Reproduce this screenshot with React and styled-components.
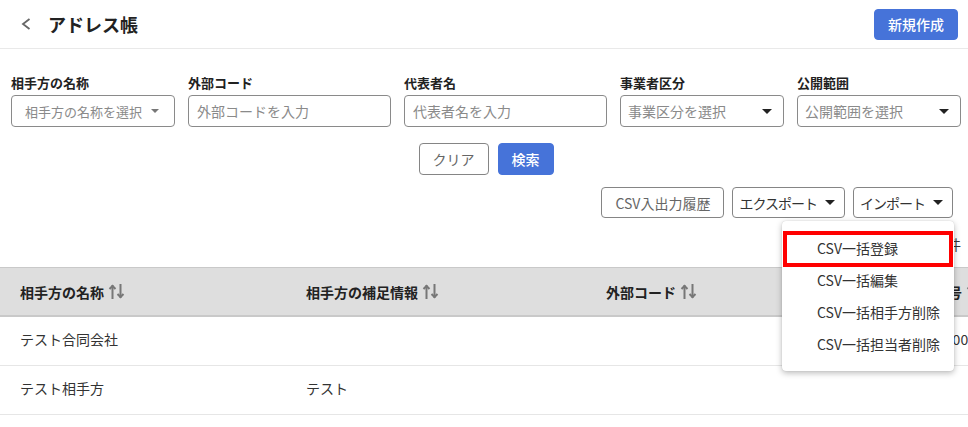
import React from "react";
import styled, { createGlobalStyle } from "styled-components";

const FONT = `"Noto Sans CJK JP", "Noto Sans", sans-serif`;

const GlobalStyle = createGlobalStyle`
  html, body {
    margin: 0;
    padding: 0;
    background: #ffffff;
    overflow: hidden;
  }
  body {
    font-family: ${FONT};
    color: #222;
  }
  * { box-sizing: border-box; }
`;

const Page = styled.div`
  width: 968px;
  min-height: 427px;
  background: #fff;
`;

const Header = styled.header`
  height: 49px;
  display: flex;
  align-items: center;
  gap: 16px;
  padding: 0 10px 0 20px;
  border-bottom: 1px solid #e9e9e9;
`;

const BackButton = styled.button`
  border: none;
  background: transparent;
  padding: 0;
  width: 12px;
  height: 12px;
  display: flex;
  cursor: pointer;
`;

const Title = styled.h1`
  margin: 0;
  font-size: 18px;
  font-weight: 700;
  color: #222;
  flex: 1;
`;

const Button = styled.button`
  height: ${(p) => (p.$small ? "31px" : "32px")};
  padding: ${(p) => (p.$dropdown ? "0 8px 0 6px" : "0 13px")};
  border-radius: 4px;
  font-family: ${FONT};
  font-size: 14px;
  display: inline-flex;
  align-items: center;
  gap: 7px;
  white-space: nowrap;
  cursor: pointer;
  border: 1px solid ${(p) => (p.$primary ? "#4673d9" : "#858585")};
  background: ${(p) => (p.$primary ? "#4673d9" : "#fff")};
  color: ${(p) => (p.$primary ? "#fff" : p.$muted ? "#666" : "#333")};
  font-weight: ${(p) => (p.$primary ? 500 : 400)};
`;

const ButtonLabel = styled.span`
  letter-spacing: -1px;
`;

const HeaderButton = styled(Button)`
  padding: 0 13px;
  height: 31px;
`;

const FilterSection = styled.section`
  padding: 25px 7px 0 11px;
`;

const FilterGrid = styled.div`
  display: grid;
  grid-template-columns: 164px 203px 203px 164px 164px;
  column-gap: 13px;
`;

const Field = styled.div`
  display: flex;
  flex-direction: column;
`;

const Label = styled.label`
  font-size: 13px;
  font-weight: 700;
  line-height: 20px;
  color: #222;
  margin-bottom: 2px;
  margin-top: -1px;
`;

const TextInput = styled.input`
  height: 32px;
  width: 100%;
  border: 1px solid #8a8a8a;
  border-radius: 4px;
  padding: 0 8px;
  font-family: ${FONT};
  font-size: 14px;
  color: #333;
  outline: none;
  &::placeholder {
    color: #8a8a8a;
  }
`;

const SelectBox = styled.div`
  height: 32px;
  border: 1px solid #8a8a8a;
  border-radius: 4px;
  padding: ${(p) => (p.$compact ? "0 14px 0 13px" : "0 10px 0 7px")};
  display: flex;
  align-items: center;
  justify-content: space-between;
  font-size: ${(p) => (p.$compact ? "13px" : "14px")};
  color: #8a8a8a;
  cursor: pointer;
`;

const ActionRow = styled.div`
  margin-top: 16px;
  display: flex;
  justify-content: center;
  gap: 9px;
`;

const Toolbar = styled.div`
  margin-top: 12px;
  display: flex;
  justify-content: flex-end;
  gap: 8px;
  padding-right: 8px;
`;

const DropdownWrap = styled.div`
  position: relative;
`;

const Menu = styled.ul`
  position: absolute;
  top: calc(100% + 3px);
  right: -1px;
  width: 172px;
  margin: 0;
  padding: 11px 0;
  list-style: none;
  background: #fff;
  border-radius: 4px;
  box-shadow: 0 2px 6px rgba(0, 0, 0, 0.28), 0 0 1px rgba(0, 0, 0, 0.2);
  z-index: 10;
`;

const MenuItem = styled.li`
  height: 32px;
  display: flex;
  align-items: center;
  padding-left: 35px;
  font-size: 14px;
  color: #333;
  white-space: nowrap;
  cursor: pointer;
`;

const Highlight = styled.div`
  position: absolute;
  top: 10px;
  left: 1px;
  width: 170px;
  height: 36px;
  border: 4px solid #ff0000;
  pointer-events: none;
`;

const CountRow = styled.div`
  margin-top: 16px;
  margin-bottom: 13px;
  display: flex;
  justify-content: flex-end;
  font-size: 14px;
  line-height: 20px;
  color: #333;
`;

const Table = styled.div`
  width: 968px;
  overflow: hidden;
`;

const HeadRow = styled.div`
  display: grid;
  grid-template-columns: 286px 300px 300px 1fr;
  height: 50px;
  background: #dedede;
  border-top: 1px solid #c9c9c9;
  border-bottom: 2px solid #c9c9c9;
`;

const HeadCell = styled.div`
  display: flex;
  align-items: center;
  gap: 4px;
  padding-left: 20px;
  font-size: 14px;
  font-weight: 700;
  color: #222;
  white-space: nowrap;
`;

const BodyRow = styled.div`
  display: grid;
  grid-template-columns: 286px 300px 300px 1fr;
  height: 49px;
  border-bottom: 1px solid #e6e6e6;
`;

const Cell = styled.div`
  display: flex;
  align-items: center;
  padding-left: 20px;
  padding-bottom: 5px;
  font-size: 14px;
  color: #333;
  white-space: nowrap;
`;

const Caret = ({ color = "#222", w = 10, h = 5 }) => (
  <svg width={w + 2} height={h + 2} viewBox={`0 0 ${w + 2} ${h + 2}`}>
    <polygon points={`1,1 ${w + 1},1 ${w / 2 + 1},${h + 1}`} fill={color} />
  </svg>
);

const SortIcon = () => (
  <svg width="17" height="17" viewBox="0 0 17 17">
    <g stroke="#777" strokeWidth="2" fill="none" strokeLinecap="square">
      <line x1="4.5" y1="3" x2="4.5" y2="15" />
      <polyline points="1.5,6 4.5,3 7.5,6" strokeLinecap="butt" />
      <line x1="12.5" y1="2" x2="12.5" y2="14" />
      <polyline points="9.5,11 12.5,14 15.5,11" strokeLinecap="butt" />
    </g>
  </svg>
);

const Select = ({ placeholder, compact }) => (
  <SelectBox $compact={compact}>
    <span>{placeholder}</span>
    {compact ? <Caret color="#777" w={8} h={4} /> : <Caret />}
  </SelectBox>
);

const rows = [
  ["テスト合同会社", "", "", "1000000000000"],
  ["テスト相手方", "テスト", "", ""],
];

export default function App() {
  return (
    <Page>
      <GlobalStyle />
      <Header>
        <BackButton aria-label="戻る">
          <svg width="12" height="12" viewBox="0 0 12 12">
            <polyline points="9.5,1 3,6 9.5,11" fill="none" stroke="#666" strokeWidth="1.8" />
          </svg>
        </BackButton>
        <Title>アドレス帳</Title>
        <HeaderButton $primary>新規作成</HeaderButton>
      </Header>

      <FilterSection>
        <FilterGrid>
          <Field>
            <Label>相手方の名称</Label>
            <Select placeholder="相手方の名称を選択" compact />
          </Field>
          <Field>
            <Label>外部コード</Label>
            <TextInput placeholder="外部コードを入力" />
          </Field>
          <Field>
            <Label>代表者名</Label>
            <TextInput placeholder="代表者名を入力" />
          </Field>
          <Field>
            <Label>事業者区分</Label>
            <Select placeholder="事業区分を選択" />
          </Field>
          <Field>
            <Label>公開範囲</Label>
            <Select placeholder="公開範囲を選択" />
          </Field>
        </FilterGrid>

        <ActionRow>
          <Button $muted>クリア</Button>
          <Button $primary>検索</Button>
        </ActionRow>

        <Toolbar>
          <Button $small $muted>CSV入出力履歴</Button>
          <Button $small $dropdown>
            <ButtonLabel>エクスポート</ButtonLabel>
            <Caret />
          </Button>
          <DropdownWrap>
            <Button $small $dropdown>
              <ButtonLabel>インポート</ButtonLabel>
              <Caret />
            </Button>
            <Menu>
              <Highlight />
              <MenuItem>CSV一括登録</MenuItem>
              <MenuItem>CSV一括編集</MenuItem>
              <MenuItem>CSV一括相手方削除</MenuItem>
              <MenuItem>CSV一括担当者削除</MenuItem>
            </Menu>
          </DropdownWrap>
        </Toolbar>

        <CountRow>全2件</CountRow>
      </FilterSection>

      <Table>
        <HeadRow>
          <HeadCell>相手方の名称<SortIcon /></HeadCell>
          <HeadCell>相手方の補足情報<SortIcon /></HeadCell>
          <HeadCell>外部コード<SortIcon /></HeadCell>
          <HeadCell>法人番号<SortIcon /></HeadCell>
        </HeadRow>
        {rows.map((r, i) => (
          <BodyRow key={i}>
            {r.map((c, j) => (
              <Cell key={j}>{c}</Cell>
            ))}
          </BodyRow>
        ))}
      </Table>
    </Page>
  );
}
